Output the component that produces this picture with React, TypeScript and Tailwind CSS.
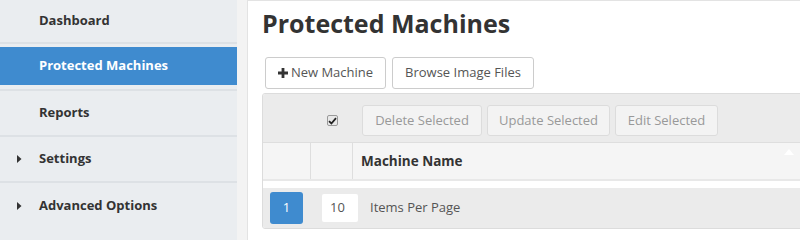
import React from "react";

const font = { fontFamily: '"Open Sans", "Liberation Sans", sans-serif' };

function Caret() {
  return (
    <svg width="5" height="8" viewBox="0 0 5 8" className="absolute left-[17px] top-1/2 -translate-y-1/2">
      <path d="M0 0 L4.5 4 L0 8 Z" fill="#333" />
    </svg>
  );
}

function SideItem({ label, active, caret, h = "h-[44px]" }: { label: string; active?: boolean; caret?: boolean; h?: string }) {
  return (
    <div className={`relative ${h} border-b-2 border-[#dde1e5] flex items-center`}>
      {caret && <Caret />}
      {active ? (
        <div className="absolute left-0 right-0 top-[3px] bottom-[4px] bg-[#3f8bcf] flex items-center pl-[39px] text-white text-[13px] font-bold">
          {label}
        </div>
      ) : (
        <span className="pl-[39px] text-[13px] font-bold text-[#333]">{label}</span>
      )}
    </div>
  );
}

export default function App() {
  return (
    <div className="w-[800px] h-[240px] overflow-hidden flex bg-[#f3f3f3]" style={font}>
      <div className="w-[237px] shrink-0 h-full bg-[#eaedf0] flex flex-col">
        <SideItem label="Dashboard" h="h-[44px]" />
        <SideItem label="Protected Machines" active h="h-[47px]" />
        <SideItem label="Reports" h="h-[46px]" />
        <SideItem label="Settings" caret h="h-[46px]" />
        <div className="relative h-[46px] flex items-center">
          <Caret />
          <span className="pl-[39px] text-[13px] font-bold text-[#333]">Advanced Options</span>
        </div>
      </div>
      <div className="ml-[10px] flex-1 h-full bg-white border-l border-t border-[#e3e3e3] pl-[14px] min-w-0">
        <h1 className="text-[25px] font-bold text-[#333] leading-none mt-[10px] h-[35px]">Protected Machines</h1>
        <div className="flex gap-[6px] ml-[3px] mt-[11px]">
          <button className="h-[32px] w-[121px] border border-[#ccc] rounded-[3px] bg-white text-[13px] text-[#555] flex items-center justify-center gap-[3px]">
            <svg width="10" height="10" viewBox="0 0 10 10"><path d="M3.6 0h2.8v3.6H10v2.8H6.4V10H3.6V6.4H0V3.6h3.6z" fill="#333" /></svg>
            New Machine
          </button>
          <button className="h-[32px] w-[142px] border border-[#ccc] rounded-[3px] bg-white text-[13px] text-[#555]">Browse Image Files</button>
        </div>
        <div className="mt-[4px] w-[560px] border border-[#dcdcdc] rounded-[3px] overflow-hidden">
          <div className="h-[49px] bg-[#ebebeb] flex items-start pt-[11px] border-b border-[#dedede]">
            <div className="w-[99px] h-[31px] flex items-center justify-end pr-[24px]">
              <div className="w-[11px] h-[11px] rounded-[2px] border border-[#999] bg-[#e8e8e8] flex items-center justify-center">
                <svg width="9" height="8" viewBox="0 0 9 8"><path d="M1 4.2 L3.4 6.5 L8 1.2" stroke="#222" strokeWidth="1.8" fill="none" /></svg>
              </div>
            </div>
            <div className="flex gap-[5px]">
              <button className="h-[31px] w-[120px] border border-[#dcdcdc] rounded-[3px] bg-[#f3f3f3] text-[13px] text-[#999]">Delete Selected</button>
              <button className="h-[31px] w-[123px] border border-[#dcdcdc] rounded-[3px] bg-[#f3f3f3] text-[13px] text-[#999]">Update Selected</button>
              <button className="h-[31px] w-[103px] border border-[#dcdcdc] rounded-[3px] bg-[#f3f3f3] text-[13px] text-[#999]">Edit Selected</button>
            </div>
          </div>
          <div className="h-[38px] bg-[#f5f5f5] flex border-b-2 border-[#e8e8e8] relative">
            <div className="w-[48px] border-r border-[#dedede]" />
            <div className="w-[42px] border-r border-[#dedede]" />
            <div className="flex items-center pl-[8px] text-[13.5px] font-bold text-[#333]">Machine Name</div>
            <svg width="10" height="6" viewBox="0 0 10 6" className="absolute left-[521px] top-[6px]"><path d="M0 6 L5 0 L10 6 Z" fill="#fff" /></svg>
          </div>
          <div className="h-[7px] bg-white" />
          <div className="h-[40px] bg-[#ebebeb] flex items-center pl-[7px]">
            <div className="w-[33px] h-[32px] rounded-[3px] bg-[#3f8bcf] text-white text-[13px] flex items-center justify-center">1</div>
            <div className="ml-[19px] w-[36px] h-[28px] bg-white rounded-[2px] text-[13px] text-[#555] flex items-center pl-[8px]">10</div>
            <span className="ml-[12px] text-[13px] text-[#555]">Items Per Page</span>
          </div>
        </div>
      </div>
    </div>
  );
}
